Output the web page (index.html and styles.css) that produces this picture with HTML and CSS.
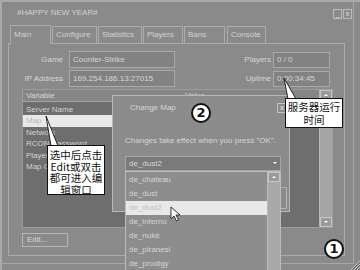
FILE: index.html
```html
<!DOCTYPE html>
<html>
<head>
<meta charset="utf-8">
<link rel="stylesheet" href="styles.css">
</head>
<body>
<div class="window">
  <div class="titlebar">
    <span class="title">#HAPPY NEW YEAR#</span>
    <div class="winbtns"><span class="winbtn">_</span><span class="winbtn">x</span></div>
  </div>
  <div class="tabs">
    <span class="tab tab-main active">Main</span>
    <span class="tab tab-configure">Configure</span>
    <span class="tab tab-stats">Statistics</span>
    <span class="tab tab-players">Players</span>
    <span class="tab tab-bans">Bans</span>
    <span class="tab tab-console">Console</span>
  </div>
  <div class="panel">
    <div class="form-row">
      <div class="pair pair-left"><span class="label">Game</span><span class="field">Counter-Strike</span></div>
      <div class="pair pair-right"><span class="label">Players</span><span class="field">0 / 0</span></div>
    </div>
    <div class="form-row">
      <div class="pair pair-left"><span class="label">IP Address</span><span class="field">169.254.186.13:27015</span></div>
      <div class="pair pair-right"><span class="label">Uptime</span><span class="field">0:00:34:45</span></div>
    </div>
    <div class="listbox">
      <div class="list">
        <div class="list-head"><span class="col-var">Variable</span><span class="col-val">Value</span></div>
        <div class="row"><span class="col-var">Server Name</span></div>
        <div class="row selected"><span class="col-var">Map</span></div>
        <div class="row"><span class="col-var">Network</span></div>
        <div class="row"><span class="col-var">RCON Password</span></div>
        <div class="row"><span class="col-var">Players</span></div>
        <div class="row"><span class="col-var">Map Cycle</span></div>
      </div>
      <div class="vscroll"><span class="arrow up"></span><span class="track"></span><span class="arrow down"></span></div>
    </div>
    <button class="btn-edit">Edit...</button>
  </div>

  <div class="dialog">
    <div class="dialog-head"><span class="dialog-title">Change Map</span><span class="dlg-close">x</span></div>
    <div class="dialog-msg">Changes take effect when you press "OK".</div>
    <div class="combo"><span class="combo-text">de_dust2</span><span class="combo-btn"></span></div>
    <div class="dialog-actions"><span class="dlg-btn"></span></div>
  </div>

  <div class="dropdown">
    <div class="dd-items">
      <div class="dd-item">de_chateau</div>
      <div class="dd-item">de_dust</div>
      <div class="dd-item selected">de_dust2</div>
      <div class="dd-item">de_inferno</div>
      <div class="dd-item">de_nuke</div>
      <div class="dd-item">de_piranesi</div>
      <div class="dd-item">de_prodigy</div>
    </div>
    <div class="dd-scroll"><span class="arrow up"></span></div>
  </div>

  <svg class="tails" width="360" height="270" viewBox="0 0 360 270">
    <polygon points="46,116 51,146 58,146" fill="#fff" stroke="#111" stroke-width="0.9"/>
    <polygon points="284,78 288,99 296,99" fill="#fff" stroke="#111" stroke-width="0.9"/>
  </svg>

  <div class="callout callout-left">选中后点击<br>Edit或双击<br>都可进入编<br>辑窗口</div>
  <div class="callout callout-right">服务器运行<br>时间</div>

  <div class="badge badge-two">2</div>
  <div class="badge badge-one">1</div>

  <svg class="cursor" width="11" height="16" viewBox="0 0 11 16">
    <path d="M1 1 L1 13 L4 10 L6.5 15 L8.5 14 L6 9 L10 9 Z" fill="#fff" stroke="#333" stroke-width="1"/>
  </svg>

  <svg class="grip" width="10" height="10" viewBox="0 0 10 10">
    <path d="M10 1 L1 10 M10 4 L4 10 M10 7 L7 10" stroke="#d0d0d0" stroke-width="1"/>
    <path d="M10 2 L2 10 M10 5 L5 10 M10 8 L8 10" stroke="#5c5c5c" stroke-width="1"/>
  </svg>
</div>
</body>
</html>
```

FILE: styles.css
```css
html, body {
  margin: 0;
  padding: 0;
}
body {
  background: #8a8a8a;
  font: 8px/10px "Liberation Sans", Arial, sans-serif;
  color: #d6d6d6;
  overflow: hidden;
}
.window {
  position: relative;
  width: 360px;
  height: 270px;
  overflow: hidden;
  box-shadow: inset 2px 2px 0 #a9a9a9, inset -6px -6px 0 #8a8a8a, inset -7px -7px 0 #a6a6a6;
}
.titlebar {
  display: flex;
  height: 26px;
  box-sizing: border-box;
  padding: 8px 8px 0 17px;
}
.title {
  line-height: 10px;
  color: #d2d2d2;
}
.winbtns {
  margin-left: auto;
  display: flex;
  gap: 1px;
  margin-top: 1px;
}
.winbtn {
  width: 9px;
  height: 10px;
  box-sizing: border-box;
  border: 1px solid #bcbcbc;
  font-size: 7px;
  line-height: 7px;
  text-align: center;
  color: #e4e4e4;
}

.tabs {
  display: flex;
  align-items: flex-end;
  height: 17px;
  padding-left: 10px;
  gap: 1px;
  position: relative;
  z-index: 1;
}
.tab {
  height: 17px;
  box-sizing: border-box;
  border: 1px solid #acacac;
  border-bottom: none;
  padding: 3px 0 0 3px;
  line-height: 10px;
  color: #d2d2d2;
}
.tab.active {
  height: 19px;
  margin-bottom: -1px;
  background: #8a8a8a;
  padding-top: 4px;
}
.tab-main { width: 41px; }
.tab-configure { width: 45px; }
.tab-stats { width: 44px; }
.tab-players { width: 40px; }
.tab-bans { width: 41px; }
.tab-console { width: 39px; margin-left: 1px; }

.panel {
  margin-left: 8px;
  width: 337px;
  height: 213px;
  box-sizing: border-box;
  border: 1px solid #ababab;
  padding: 7px 11px 0 13px;
  display: flex;
  flex-direction: column;
}
.form-row {
  display: flex;
  height: 17px;
  align-items: center;
}
.form-row + .form-row {
  margin-top: 2px;
}
.pair {
  display: flex;
  align-items: center;
  height: 100%;
}
.pair-left .label {
  width: 41px;
  text-align: right;
}
.pair-left .field {
  margin-left: 6px;
  width: 106px;
}
.pair-right {
  margin-left: auto;
  margin-right: 3px;
}
.pair-right .field {
  margin-left: 2px;
  width: 57px;
  height: 16px;
  line-height: 14px;
}
.field {
  height: 17px;
  box-sizing: border-box;
  border: 1px solid #a9a9a9;
  background: #828282;
  padding-left: 3px;
  line-height: 15px;
  white-space: nowrap;
  overflow: hidden;
}

.listbox {
  margin-top: 2px;
  height: 139px;
  display: flex;
  box-sizing: border-box;
  border: 1px solid #9d9d9d;
  background: #6e6e6e;
}
.list {
  flex: 1;
}
.list-head {
  display: flex;
  height: 12px;
  box-sizing: border-box;
  background: #868686;
  border-bottom: 1px solid #a2a2a2;
  line-height: 11px;
  margin-bottom: 1.5px;
}
.col-var {
  width: 159px;
  padding-left: 3px;
  box-sizing: border-box;
  white-space: nowrap;
}
.col-val {
  padding-left: 3px;
}
.row {
  display: flex;
  height: 11.5px;
  line-height: 11.5px;
  color: #d2d2d2;
}
.row.selected {
  background: #e9e9e9;
  color: #b8b8b8;
}
.vscroll {
  width: 12px;
  display: flex;
  flex-direction: column;
  background: #a5a5a5;
  border-left: 1px solid #b8b8b8;
}
.vscroll .track {
  flex: 1;
}
.arrow {
  display: block;
  height: 10px;
  box-sizing: border-box;
  border: 1px solid #c6c6c6;
  background: #9a9a9a;
  position: relative;
}
.arrow::after {
  content: "";
  position: absolute;
  left: 3px;
  top: 3px;
  border-left: 2px solid transparent;
  border-right: 2px solid transparent;
}
.arrow.up::after {
  border-bottom: 2px solid #fff;
}
.arrow.down::after {
  border-top: 2px solid #fff;
}

.btn-edit {
  margin-top: 5px;
  align-self: flex-start;
  width: 46px;
  height: 14px;
  box-sizing: border-box;
  border: 1px solid #b6b6b6;
  background: #8a8a8a;
  color: #d8d8d8;
  font: inherit;
  line-height: 12px;
  text-align: left;
  padding: 0 0 0 4px;
}

.dialog {
  position: absolute;
  left: 112px;
  top: 95px;
  width: 178px;
  height: 117px;
  box-sizing: border-box;
  border: 1px solid #b8b8b8;
  background: #8b8b8b;
  padding: 7px 2px 0 12px;
  display: flex;
  flex-direction: column;
  z-index: 2;
}
.dialog-head {
  display: flex;
  height: 10px;
}
.dialog-title {
  padding-left: 5px;
  line-height: 10px;
}
.dlg-close {
  margin-left: auto;
  width: 10px;
  height: 10px;
  box-sizing: border-box;
  border: 1px solid #c2c2c2;
  font-size: 8px;
  line-height: 7px;
  text-align: center;
  color: #eee;
}
.dialog-msg {
  margin-top: 23px;
  line-height: 10px;
  white-space: nowrap;
}
.combo {
  margin-top: 10px;
  width: 156px;
  height: 15px;
  box-sizing: border-box;
  border: 1px solid #a6a6a6;
  background: #7a7a7a;
  display: flex;
  align-items: center;
}
.combo-text {
  padding-left: 3px;
  flex: 1;
}
.combo-btn {
  width: 9px;
  height: 100%;
  position: relative;
}
.combo-btn::after {
  content: "";
  position: absolute;
  left: 2px;
  top: 5px;
  border-left: 2px solid transparent;
  border-right: 2px solid transparent;
  border-top: 2px solid #fff;
}
.dialog-actions {
  margin-top: 16px;
  display: flex;
  justify-content: flex-end;
}
.dlg-btn {
  width: 60px;
  height: 22px;
  box-sizing: border-box;
  border: 1px solid #b3b3b3;
}

.dropdown {
  position: absolute;
  left: 125px;
  top: 171px;
  width: 156px;
  height: 102px;
  box-sizing: border-box;
  border: 1px solid #bdbdbd;
  background: #8d8d8d;
  display: flex;
  z-index: 3;
}
.dd-items {
  flex: 1;
  padding-top: 1px;
}
.dd-item {
  height: 14px;
  line-height: 14px;
  padding-left: 3px;
  color: #d4d4d4;
}
.dd-item.selected {
  background: #e8e8e8;
  color: #c0c0c0;
}
.dd-scroll {
  width: 12px;
  background: #a8a8a8;
  border-left: 1px solid #bdbdbd;
}

.tails {
  position: absolute;
  left: 0;
  top: 0;
  z-index: 4;
}
.callout {
  position: absolute;
  box-sizing: border-box;
  border: 1px solid #111;
  background: #fff;
  color: #111;
  font: 10.5px "Noto Sans CJK SC", "Noto Sans", sans-serif;
  text-align: center;
  white-space: nowrap;
  z-index: 5;
}
.callout-left {
  left: 47px;
  top: 145px;
  width: 58px;
  height: 50px;
  line-height: 11.5px;
  padding-top: 3px;
}
.callout-right {
  left: 285px;
  top: 98px;
  width: 58px;
  height: 30px;
  line-height: 12.5px;
  padding-top: 2px;
}
.badge {
  position: absolute;
  width: 20px;
  height: 20px;
  box-sizing: border-box;
  border: 2px solid #111;
  border-radius: 50%;
  background: #fff;
  color: #111;
  font: bold 13px/16px "DejaVu Sans", sans-serif;
  text-align: center;
  z-index: 6;
}
.badge-two {
  left: 191px;
  top: 103px;
}
.badge-one {
  left: 324px;
  top: 239px;
}
.cursor {
  position: absolute;
  left: 170px;
  top: 206px;
  z-index: 7;
}
.grip {
  position: absolute;
  right: 0;
  bottom: 0;
  z-index: 7;
}
```
